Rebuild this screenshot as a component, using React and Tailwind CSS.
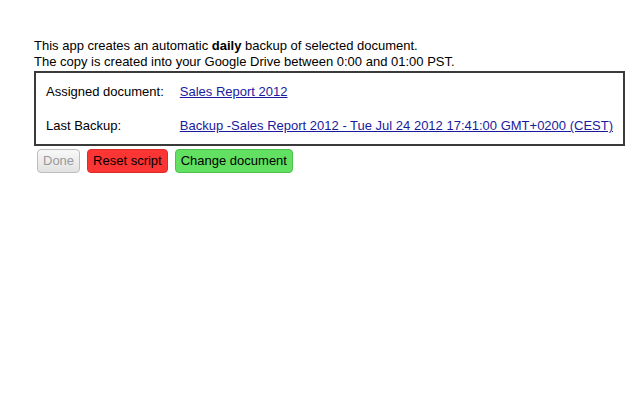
export default function App() {
  return (
    <div className="min-h-screen bg-white pt-[38px] pl-[34px] text-[13px] leading-4 text-black font-['Liberation_Sans',Arial,sans-serif]">
      <p>
        This app creates an automatic <b>daily</b> backup of selected document.
      </p>
      <p>The copy is created into your Google Drive between 0:00 and 01:00 PST.</p>

      <div className="mt-px w-[591px] border-2 border-[#3a3a3a] px-[10px] pt-[2px] pb-px">
        <table className="border-collapse whitespace-nowrap">
          <tbody>
            <tr className="h-[34px] align-middle">
              <td className="w-[134px]">Assigned document:</td>
              <td>
                <a href="#" className="text-[#1a1a9e] underline">Sales Report 2012</a>
              </td>
            </tr>
            <tr className="h-[34px] align-middle">
              <td>Last Backup:</td>
              <td>
                <a href="#" className="text-[#1a1a9e] underline">
                  Backup -Sales Report 2012 - Tue Jul 24 2012 17:41:00 GMT+0200 (CEST)
                </a>
              </td>
            </tr>
          </tbody>
        </table>
      </div>

      <div className="mt-[3px] ml-[3px] flex gap-[7px]">
        <button className="h-[24px] px-[5px] rounded-[4px] border border-[#bdbdbd] bg-gradient-to-b from-[#f8f8f8] to-[#e2e2e2] text-[#9a9a9a]">
          Done
        </button>
        <button className="h-[24px] px-[5px] rounded-[4px] border border-[#e02a2a] bg-[#fb3434] text-black">
          Reset script
        </button>
        <button className="h-[24px] px-[5px] rounded-[4px] border border-[#4cbf4c] bg-[#62e062] text-black">
          Change document
        </button>
      </div>
    </div>
  )
}
